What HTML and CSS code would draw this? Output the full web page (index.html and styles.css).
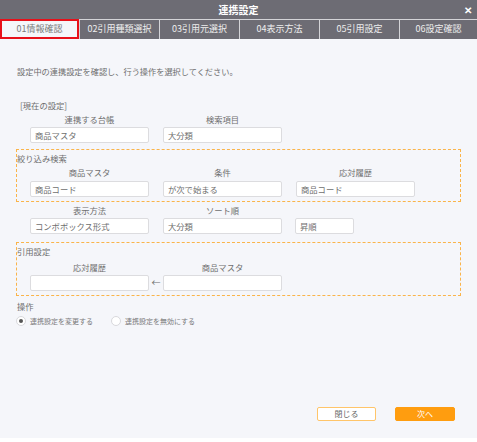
FILE: index.html
```html
<!DOCTYPE html>
<html lang="ja">
<head>
<meta charset="utf-8">
<link rel="stylesheet" href="styles.css">
</head>
<body>
<div class="dialog">
  <div class="titlebar">
    <span class="title">連携設定</span>
    <span class="close">✕</span>
  </div>
  <div class="tabs">
    <div class="tab active">01情報確認</div>
    <div class="tab">02引用種類選択</div>
    <div class="tab">03引用元選択</div>
    <div class="tab">04表示方法</div>
    <div class="tab">05引用設定</div>
    <div class="tab">06設定確認</div>
  </div>
  <div class="content">
    <p class="intro">設定中の連携設定を確認し、行う操作を選択してください。</p>

    <div class="section-title current">[現在の設定]</div>
    <div class="fields plain">
      <div class="field"><div class="label">連携する台帳</div><div class="input">商品マスタ</div></div>
      <div class="field"><div class="label">検索項目</div><div class="input">大分類</div></div>
    </div>

    <div class="box box1">
      <div class="box-title">絞り込み検索</div>
      <div class="fields">
        <div class="field"><div class="label">商品マスタ</div><div class="input">商品コード</div></div>
        <div class="field"><div class="label">条件</div><div class="input">が次で始まる</div></div>
        <div class="field"><div class="label">応対履歴</div><div class="input">商品コード</div></div>
      </div>
    </div>

    <div class="fields plain row3">
      <div class="field"><div class="label">表示方法</div><div class="input">コンボボックス形式</div></div>
      <div class="field"><div class="label">ソート順</div><div class="input">大分類</div></div>
      <div class="field"><div class="label">&nbsp;</div><div class="input short">昇順</div></div>
    </div>

    <div class="box box2">
      <div class="box-title">引用設定</div>
      <div class="fields arrowrow">
        <div class="field"><div class="label">応対履歴</div><div class="input"></div></div>
        <div class="arrow">←</div>
        <div class="field"><div class="label">商品マスタ</div><div class="input"></div></div>
      </div>
    </div>

    <div class="section-title ops">操作</div>
    <div class="radios">
      <label class="radio"><span class="dot checked"></span><span class="rtext">連携設定を変更する</span></label>
      <label class="radio second"><span class="dot"></span><span class="rtext">連携設定を無効にする</span></label>
    </div>

    <div class="buttons">
      <button class="btn close-btn">閉じる</button>
      <button class="btn next-btn">次へ</button>
    </div>
  </div>
</div>
</body>
</html>
```

FILE: styles.css
```css
* { box-sizing: border-box; }
html, body {
  margin: 0;
  padding: 0;
  background: #ffffff;
}
body {
  font-family: "Noto Sans CJK JP", "Noto Sans", sans-serif;
  color: #6e6e6e;
}
.dialog {
  width: 477px;
  height: 442px;
  background: #f5f6fa;
  display: flex;
  flex-direction: column;
  border-bottom: 4px solid #ffffff;
}
.titlebar {
  height: 19px;
  background: #6d6c74;
  color: #fff;
  display: flex;
  align-items: center;
  justify-content: center;
  position: relative;
}
.title {
  font-size: 10px;
  font-weight: bold;
  line-height: 19px;
}
.close {
  position: absolute;
  right: 5px;
  top: 0;
  font-size: 10px;
  font-weight: bold;
  line-height: 19px;
}
.tabs {
  height: 20px;
  display: flex;
  background: #6d6c74;
}
.tab {
  width: 80px;
  height: 20px;
  border-top: 1px solid #d4d4d8;
  border-left: 1px solid #d4d4d8;
  color: #eeeeee;
  font-size: 9px;
  line-height: 18px;
  text-align: center;
}
.tab:last-child { flex: 1; }
.tab.active {
  width: 79px;
  background: #f5f6fa;
  border: 2px solid #e8101a;
  color: #7a7a7a;
  line-height: 16px;
}
.content {
  flex: 1;
  padding-left: 16px;
  display: flex;
  flex-direction: column;
}
.intro {
  margin: 26px 0 0 1px;
  font-size: 8.2px;
  line-height: 12px;
}
.section-title {
  font-size: 8.3px;
  line-height: 12px;
}
.section-title.current {
  margin: 22px 0 0 4px;
}
.fields {
  display: flex;
  gap: 14px;
  padding-left: 13px;
}
.fields.plain {
  padding-left: 14px;
  margin-top: 2px;
}
.field {
  width: 119px;
  display: flex;
  flex-direction: column;
}
.label {
  font-size: 8.3px;
  line-height: 12px;
  height: 12px;
  text-align: center;
  margin-bottom: 2px;
}
.input {
  height: 16px;
  background: #fff;
  border: 1px solid #dcdcdf;
  border-radius: 2px;
  font-size: 8.3px;
  line-height: 14px;
  padding-left: 4px;
  color: #6e6e6e;
}
.input.short { width: 59px; margin-left: -1px; }
.box {
  width: 445px;
  border: 1px dashed #fab44a;
  margin-top: 6px;
  padding: 2px 0 4px 0;
}
.box2 {
  margin-top: 8px;
  padding-bottom: 4px;
}
.box-title {
  font-size: 8.3px;
  line-height: 12px;
  margin-bottom: 2px;
}
.box1 .label { margin-bottom: 3px; }
.box2 .box-title { margin-bottom: 4px; }
.row3 { margin-top: 14px; }
.arrowrow { gap: 0; }
.arrow {
  width: 14px;
  align-self: flex-end;
  text-align: center;
  font-size: 9px;
  line-height: 16px;
}
.section-title.ops {
  margin: 4px 0 0 1px;
}
.radios {
  display: flex;
  margin-top: 3px;
  height: 12px;
  align-items: center;
}
.radio {
  display: flex;
  align-items: center;
  gap: 4px;
}
.radio.second { margin-left: 18px; }
.dot {
  width: 10px;
  height: 10px;
  border-radius: 50%;
  border: 1px solid #d8d8dc;
  background: #fff;
  position: relative;
}
.dot.checked::after {
  content: "";
  position: absolute;
  left: 2px;
  top: 2px;
  width: 4px;
  height: 4px;
  border-radius: 50%;
  background: #555;
}
.rtext {
  font-size: 7px;
  line-height: 12px;
  color: #7a7a7a;
}
.buttons {
  display: flex;
  margin-top: 80px;
  margin-left: 301px;
  gap: 19px;
}
.btn {
  width: 59px;
  height: 14px;
  padding: 0;
  border-radius: 2px;
  font-family: "Noto Sans CJK JP", "Noto Sans", sans-serif;
  font-size: 8px;
  line-height: 12px;
}
.close-btn {
  background: #fff;
  border: 1px solid #ffc56a;
  color: #666;
}
.next-btn {
  width: 60px;
  background: #ff9d0f;
  border: 1px solid #ff9d0f;
  color: #fff;
}
```
